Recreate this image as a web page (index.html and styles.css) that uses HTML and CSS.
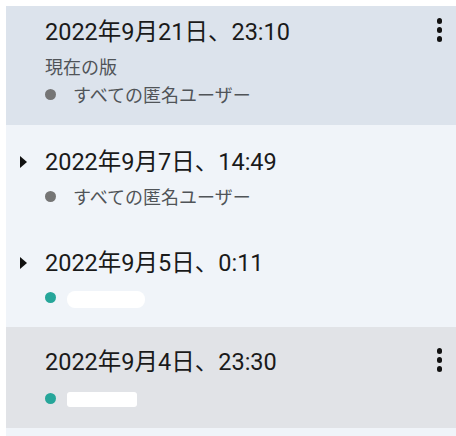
FILE: index.html
```html
<!DOCTYPE html>
<html lang="ja">
<head>
<meta charset="utf-8">
<link rel="stylesheet" href="styles.css">
</head>
<body>
<div class="panel">
  <div class="item item-current">
    <div class="row">
      <span class="date">2022年9月21日、23:10</span>
      <span class="menu"><i></i><i></i><i></i></span>
    </div>
    <div class="sub">現在の版</div>
    <div class="sub"><span class="dot dot-grey"></span><span>すべての匿名ユーザー</span></div>
  </div>
  <div class="group">
    <div class="item">
      <div class="row">
        <span class="caret"></span>
        <span class="date">2022年9月7日、14:49</span>
      </div>
      <div class="sub"><span class="dot dot-grey"></span><span>すべての匿名ユーザー</span></div>
    </div>
    <div class="item">
      <div class="row">
        <span class="caret"></span>
        <span class="date">2022年9月5日、0:11</span>
      </div>
      <div class="sub"><span class="dot dot-teal"></span><span class="redact redact-a"></span></div>
    </div>
  </div>
  <div class="item item-hover">
    <div class="row">
      <span class="date">2022年9月4日、23:30</span>
      <span class="menu"><i></i><i></i><i></i></span>
    </div>
    <div class="sub sub-tight"><span class="dot dot-teal"></span><span class="redact redact-b"></span></div>
  </div>
  <div class="tail"></div>
</div>
</body>
</html>
```
FILE: styles.css
```css
html, body {
  margin: 0;
  padding: 0;
  background: #ffffff;
}
body {
  padding: 6px 0 0 6px;
  font-family: Roboto, "Noto Sans CJK JP", sans-serif;
  color: #1f1f1f;
}
.panel {
  background: #f0f4f9;
  display: flex;
  flex-direction: column;
}
.item {
  padding: 22px 14px 16px 39px;
  display: flex;
  flex-direction: column;
}
.item-current {
  background: #dce3ec;
  padding-top: 11px;
  padding-bottom: 17px;
}
.item-hover {
  background: #e1e3e7;
  padding-top: 20px;
}
.row {
  position: relative;
  height: 30px;
  display: flex;
  align-items: center;
  justify-content: space-between;
}
.date {
  font-size: 23.5px;
  line-height: 30px;
  color: #1a1a1a;
  white-space: nowrap;
}
.caret {
  position: absolute;
  left: -25px;
  top: 9px;
  width: 0;
  height: 0;
  border-top: 6px solid transparent;
  border-bottom: 6px solid transparent;
  border-left: 7px solid #111;
}
.menu {
  display: flex;
  flex-direction: column;
  gap: 3.5px;
  margin-top: -4px;
}
.menu i {
  display: block;
  width: 5.5px;
  height: 5.5px;
  border-radius: 50%;
  background: #111;
}
.sub {
  margin-top: 5px;
  height: 28px;
  display: flex;
  align-items: center;
  font-size: 18px;
  color: #505458;
  white-space: nowrap;
}
.sub + .sub {
  margin-top: 0;
}
.sub-tight {
  margin-top: 7px;
}
.dot {
  width: 11px;
  height: 11px;
  border-radius: 50%;
  margin-left: 0;
  margin-right: 17px;
  flex: none;
}
.dot-grey { background: #757575; }
.dot-teal { background: #26a69a; margin-right: 11px; }
.redact {
  display: block;
  background: #ffffff;
  border-radius: 8px;
}
.redact-a {
  width: 78px;
  height: 17px;
  margin-top: 4px;
}
.redact-b {
  width: 70px;
  height: 15px;
  margin-top: 3px;
  border-radius: 3px;
}
.tail {
  height: 9px;
}
```
